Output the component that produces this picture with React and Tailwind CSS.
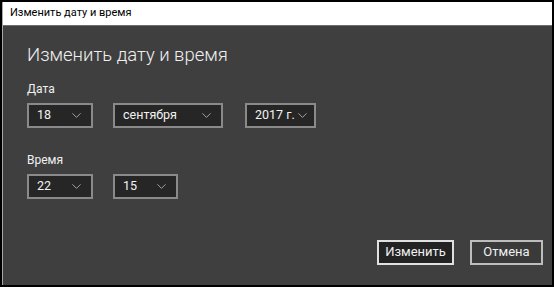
import { ChevronDown } from "lucide-react";

const font = { fontFamily: 'Roboto, "Noto Sans", sans-serif' };

const Combo = ({ value, width }) => (
  <div
    className={`${width} h-[25px] border-2 border-[#8a8a8a] bg-[#262626] flex items-center justify-between pl-[8px] pr-[7px] text-[12.5px] text-[#f2f2f2] whitespace-nowrap`}
  >
    <span className="leading-none">{value}</span>
    <ChevronDown className="w-[15px] h-[15px] text-[#bdbdbd] shrink-0" strokeWidth={1.3} />
  </div>
);

export default function App() {
  return (
    <div className="w-[554px] h-[287px] bg-black pt-[2px] pl-[2px] pr-[2px] pb-[2px]" style={font}>
      <div className="w-full h-full flex flex-col border-l border-[#a8a8a8]">
        <div className="h-[24px] bg-white border-b border-[#6e6e6e] flex items-center pl-[7px] text-[11px] text-black">
          Изменить дату и время
        </div>
        <div className="flex-1 bg-[#3f3f3f] flex flex-col pl-[24px] pr-[9px]">
          <h1 className="mt-[20px] text-[18.5px] font-light text-[#f0f0f0] leading-none">
            Изменить дату и время
          </h1>
          <div className="mt-[18px] text-[12px] text-[#f0f0f0] leading-none">Дата</div>
          <div className="mt-[8px] flex gap-[20px]">
            <Combo value="18" width="w-[66px]" />
            <Combo value="сентября" width="w-[110px]" />
            <div className="ml-[2px]">
              <Combo value="2017 г." width="w-[71px]" />
            </div>
          </div>
          <div className="mt-[26px] text-[12px] text-[#f0f0f0] leading-none">Время</div>
          <div className="mt-[8px] flex gap-[20px]">
            <Combo value="22" width="w-[66px]" />
            <Combo value="15" width="w-[65px]" />
          </div>
          <div className="mt-[41px] flex justify-end gap-[16px]">
            <button className="w-[77px] h-[25px] border-2 border-[#e0e0e0] bg-[#232323] text-[13px] text-[#f0f0f0]">
              Изменить
            </button>
            <button className="w-[73px] h-[25px] border-2 border-[#bdbdbd] bg-[#3a3a3a] text-[13px] text-[#f0f0f0]">
              Отмена
            </button>
          </div>
        </div>
      </div>
    </div>
  );
}
